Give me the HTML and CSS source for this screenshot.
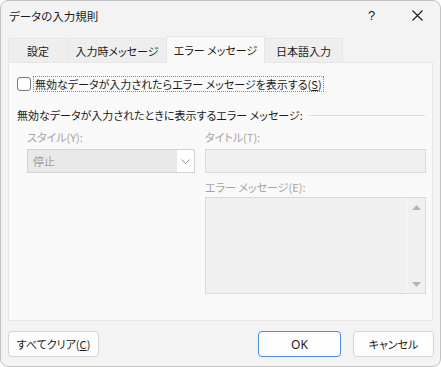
FILE: index.html
```html
<!DOCTYPE html>
<html>
<head>
    <title>データの入力規則</title>
    <link rel="stylesheet" href="styles.css">
</head>
<body>

    <div class="window">
        <div class="titlebar">
            <span class="title">データの入力規則</span>
            <span class="help">?</span>
            <span class="close">
                <svg width="11" height="11" viewBox="0 0 11 11"><path d="M0.5 0.5 L10.5 10.5 M10.5 0.5 L0.5 10.5" stroke="#1b1b1b" stroke-width="1.1" fill="none"/></svg>
            </span>
        </div>

        <div class="tabs">
            <div class="tab tab-settings">設定</div>
            <div class="tab tab-input">入力時メッセージ</div>
            <div class="tab tab-error active">エラー メッセージ</div>
            <div class="tab tab-ime">日本語入力</div>
        </div>

        <div class="panel">
            <div class="check-row">
                <span class="checkbox"></span>
                <span class="focus">無効なデータが入力されたらエラー メッセージを表示する(<u>S</u>)</span>
            </div>

            <div class="group-title">
                <span>無効なデータが入力されたときに表示するエラー メッセージ:</span>
                <span class="rule"></span>
            </div>

            <div class="fields">
                <div class="col">
                    <div class="label">スタイル(Y):</div>
                    <div class="select">
                        <span class="value">停止</span>
                        <span class="drop">
                            <svg width="9" height="5" viewBox="0 0 9 5"><path d="M0.5 0.5 L4.5 4.5 L8.5 0.5" stroke="#8c8c8c" stroke-width="1" fill="none"/></svg>
                        </span>
                    </div>
                </div>
                <div class="col">
                    <div class="label">タイトル(T):</div>
                    <div class="input"></div>
                    <div class="label label-msg">エラー メッセージ(E):</div>
                    <div class="textarea">
                        <div class="scrollbar">
                            <svg width="9" height="5" viewBox="0 0 9 5"><path d="M0 5 L4.5 0 L9 5 Z" fill="#b4b4b4"/></svg>
                            <svg width="9" height="5" viewBox="0 0 9 5"><path d="M0 0 L4.5 5 L9 0 Z" fill="#b4b4b4"/></svg>
                        </div>
                    </div>
                </div>
            </div>
        </div>

        <div class="footer">
            <button class="btn btn-clear">すべてクリア(<u>C</u>)</button>
            <span class="spacer"></span>
            <button class="btn btn-ok">OK</button>
            <button class="btn btn-cancel">キャンセル</button>
        </div>
    </div>

</body>
</html>
```

FILE: styles.css
```css
body {
    margin: 0;
    font-family: "Noto Sans CJK JP", "Noto Sans", sans-serif;
    font-size: 11px;
    font-feature-settings: "palt";
    color: #1b1b1b;
    background: #ffffff;
}
.window {
    width: 441px;
    height: 367px;
    box-sizing: border-box;
    border: 1px solid #c2c2c2;
    border-radius: 8px;
    background: #f3f3f3;
    display: flex;
    flex-direction: column;
    overflow: hidden;
}
.titlebar {
    height: 29px;
    display: flex;
    align-items: center;
    padding-left: 8px;
}
.title {
    flex: 1;
    line-height: 16px;
    font-size: 11.5px;
}
.help {
    font-family: "Liberation Sans", sans-serif;
    font-size: 13px;
    width: 12px;
    margin-right: 32px;
}
.close {
    display: flex;
    margin-right: 17px;
}

/* tabs */
.tabs {
    display: flex;
    align-items: flex-end;
    height: 25px;
    margin-top: 7px;
    padding-left: 7px;
}
.tab {
    height: 24px;
    box-sizing: border-box;
    display: flex;
    align-items: center;
    justify-content: center;
    background: #eeeeee;
    border: 1px solid #e6e6e6;
    border-bottom: none;
    margin-right: -1px;
    line-height: 16px;
    padding-top: 1px;
}
.tab.active {
    background: #f9f9f9;
    position: relative;
    z-index: 1;
    margin-bottom: -1px;
    height: 27px;
    padding-top: 0;
}
.tab-settings { width: 60px; }
.tab-input { width: 100px; }
.tab-error { width: 99px; }
.tab-ime { width: 79px; }

/* panel */
.panel {
    height: 259px;
    box-sizing: border-box;
    margin: 0 7px;
    background: #f9f9f9;
    border: 1px solid #e6e6e6;
    padding: 13px 7px 0 8px;
}
.check-row {
    display: flex;
    align-items: center;
    height: 15px;
}
.checkbox {
    width: 12px;
    height: 12px;
    border: 1px solid #7a7a7a;
    border-radius: 3px;
    background: #fdfdfd;
    margin-right: 2px;
}
.focus {
    border: 1px dotted #8a8a8a;
    padding: 0 1px;
    line-height: 14px;
}
.group-title {
    display: flex;
    align-items: center;
    margin-top: 16px;
    line-height: 16px;
}
.rule {
    flex: 1;
    height: 1px;
    background: #dedede;
    margin-left: 6px;
    margin-right: 0;
}
.fields {
    display: grid;
    grid-template-columns: 168px 221px;
    column-gap: 10px;
    margin-left: 10px;
    margin-top: 6px;
}
.label {
    color: #a3a3a3;
    line-height: 16px;
    margin-bottom: 4px;
}
.label-msg {
    margin-top: 6px;
    margin-bottom: 2px;
}
.select {
    height: 24px;
    box-sizing: border-box;
    border: 1px solid #d3d3d3;
    background: #e9e9e9;
    display: flex;
    align-items: center;
}
.select .value {
    flex: 1;
    padding-left: 5px;
    color: #a0a0a0;
}
.drop {
    width: 17px;
    height: 22px;
    background: #ffffff;
    display: flex;
    align-items: center;
    justify-content: center;
}
.input {
    height: 24px;
    box-sizing: border-box;
    border: 1px solid #dadada;
    background: #f0f0f0;
}
.textarea {
    height: 97px;
    box-sizing: border-box;
    border: 1px solid #dadada;
    background: #f0f0f0;
    display: flex;
    justify-content: flex-end;
}
.scrollbar {
    width: 18px;
    border-left: 1px solid #fafafa;
    display: flex;
    flex-direction: column;
    justify-content: space-between;
    align-items: center;
    padding: 7px 0 6px;
}

/* footer */
.footer {
    display: flex;
    padding: 10px 6px 0 7px;
}
.spacer { flex: 1; }
.btn {
    height: 26px;
    box-sizing: border-box;
    font-family: inherit;
    font-size: 11px;
    font-feature-settings: "palt";
    color: #1b1b1b;
    background: #fdfdfd;
    border: 1px solid #d4d4d4;
    border-radius: 4px;
    padding: 0;
}
.btn-clear { width: 91px; }
.btn-ok {
    width: 83px;
    border-color: #4a90d9;
    font-family: "Noto Sans", sans-serif;
    font-size: 12px;
}
.btn-cancel {
    width: 81px;
    margin-left: 12px;
}
```
